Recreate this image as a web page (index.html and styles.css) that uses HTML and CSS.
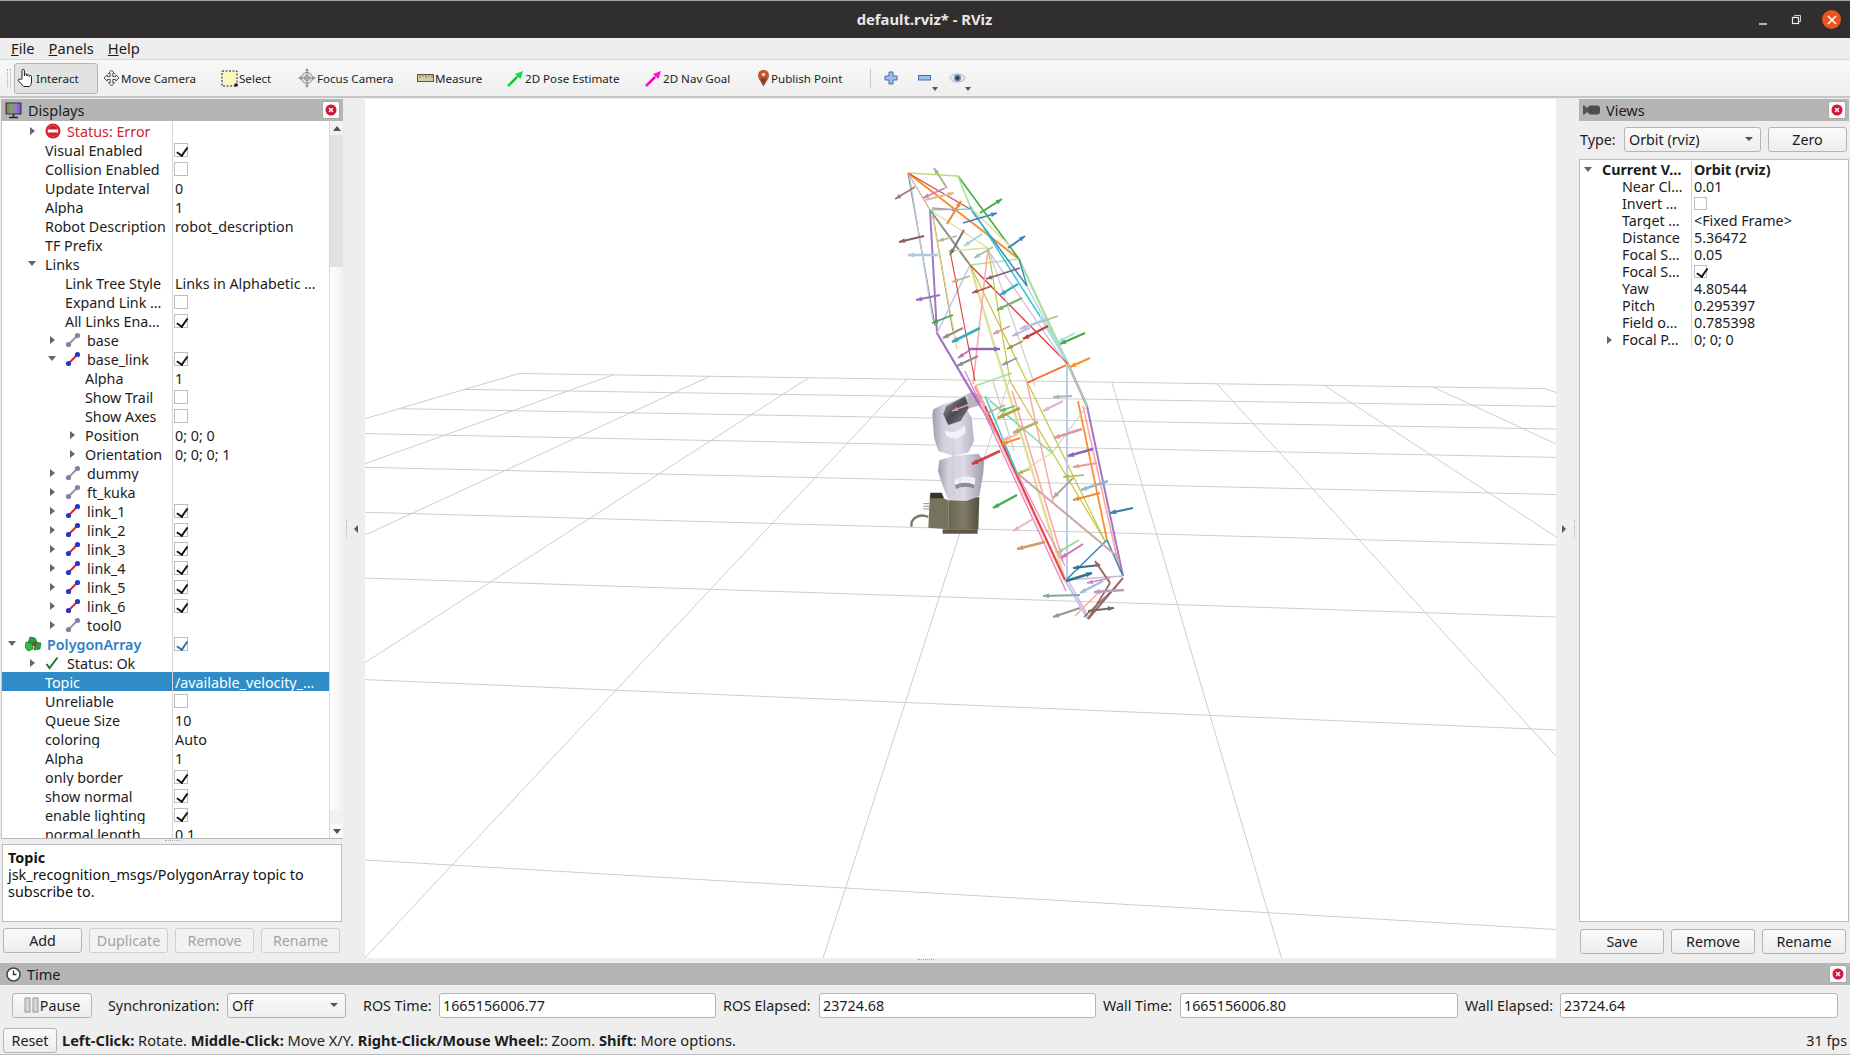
FILE: index.html
```html
<!DOCTYPE html>
<html lang="en">
<head>
  <meta charset="UTF-8">
  <title>default.rviz* - RViz</title>
  <link rel="stylesheet" href="styles.css">
</head>
<body>

  <!-- shared icons -->
  <svg class="defs" width="0" height="0">
    <defs>
      <linearGradient id="screen" x1="0" x2="1" y1="0" y2="0">
        <stop offset="0" stop-color="#d0504a"/><stop offset=".3" stop-color="#5fb35f"/>
        <stop offset=".65" stop-color="#b36fc0"/><stop offset="1" stop-color="#4a60d8"/>
      </linearGradient>
      <linearGradient id="armLight" x1="0" x2="1" y1="0" y2="0">
        <stop offset="0" stop-color="#a09dae"/><stop offset=".22" stop-color="#d2cfde"/><stop offset=".55" stop-color="#dedbe8"/><stop offset="1" stop-color="#9d9aac"/>
      </linearGradient>
      <linearGradient id="armDark" x1="0" x2="1" y1="0" y2="1">
        <stop offset="0" stop-color="#a9a7b3"/><stop offset=".5" stop-color="#4a494f"/><stop offset="1" stop-color="#8a8993"/>
      </linearGradient>
      <linearGradient id="baseSide" x1="0" x2="1" y1="0" y2="0">
        <stop offset="0" stop-color="#6b6651"/><stop offset=".5" stop-color="#807b64"/><stop offset="1" stop-color="#55503f"/>
      </linearGradient>
      <symbol id="close" viewBox="0 0 18 18">
        <rect x=".5" y=".5" width="17" height="17" rx="2" fill="#fbfbfb" stroke="#a8a8a8"/>
        <circle cx="9" cy="9" r="5.5" fill="#d3153c"/>
        <path d="M7 7l4 4M11 7l-4 4" stroke="#fff" stroke-width="1.3"/>
      </symbol>
      <symbol id="link-on" viewBox="0 0 16 16">
        <path d="M4 12L12 4" stroke="#d8262c" stroke-width="2"/>
        <circle cx="3.5" cy="12.5" r="2.6" fill="#2b35c8"/><circle cx="12.5" cy="3.5" r="2.6" fill="#2b35c8"/>
      </symbol>
      <symbol id="link-off" viewBox="0 0 16 16">
        <path d="M4 12L12 4" stroke="#a09090" stroke-width="2"/>
        <circle cx="3.5" cy="12.5" r="2.6" fill="#8581a8"/><circle cx="12.5" cy="3.5" r="2.6" fill="#8581a8"/>
      </symbol>
    </defs>
  </svg>

  <header class="titlebar">
    <span class="title">default.rviz* - RViz</span>
    <div class="wm">
      <svg width="14" height="14" viewBox="0 0 14 14"><path d="M3 11h8" stroke="#f2f2f2" stroke-width="1.4"/></svg>
      <svg width="14" height="14" viewBox="0 0 14 14"><path d="M5.500 3.500V2.500h6v6h-1.500" fill="none" stroke="#cfcfcf"/><rect x="3.500" y="4.500" width="6" height="6" fill="none" stroke="#f2f2f2" stroke-width="1.200"/></svg>
      <span class="wm-close"><svg width="12" height="12" viewBox="0 0 12 12"><path d="M2 2l8 8M10 2l-8 8" stroke="#fff" stroke-width="1.5"/></svg></span>
    </div>
  </header>

  <nav class="menubar">
    <span><u>F</u>ile</span>
    <span><u>P</u>anels</span>
    <span><u>H</u>elp</span>
  </nav>

  <div class="toolbar">
    <span class="grip"></span>
    <div class="tool active t-interact">
      <svg width="18" height="20" viewBox="0 0 18 20"><path d="M5 11V2.500a1.200 1.200 0 0 1 2.400 0V8l.2-1a1.100 1.100 0 0 1 2.200 0l.1 1 .2-.6a1.100 1.100 0 0 1 2.100 0l.1 1 .3-.4a1 1 0 0 1 1.900.4v5.500c0 2-1 3.600-2 4.600H6.500C5 17 3 14.500 1.500 12.800c-.8-1 .4-2.300 1.500-1.500z" fill="#fff" stroke="#222" stroke-width="1"/></svg>
      Interact
    </div>
    <div class="tool t-move">
      <svg width="17" height="18" viewBox="0 0 17 18"><path d="M8.500 1l3 3.500H9.800V7.500h3V5.800L16 9l-3.200 3.200v-1.700h-3V13.500h1.700l-3 3.500-3-3.500h1.700v-3h-3v1.700L1 9l3.200-3.200v1.700h3V4.500H5.500z" fill="#eee" stroke="#555" stroke-width="1"/></svg>
      Move Camera
    </div>
    <div class="tool t-select">
      <svg width="17" height="17" viewBox="0 0 17 17"><rect x="1" y="1" width="15" height="15" fill="#fbf7c0" stroke="#222" stroke-dasharray="2 1.500"/><rect x="13.500" y="13.500" width="3" height="3" fill="#111"/></svg>
      Select
    </div>
    <div class="tool t-focus">
      <svg width="18" height="20" viewBox="0 0 18 20"><circle cx="9" cy="10" r="5.500" fill="#e6e6e6" stroke="#888"/><circle cx="9" cy="10" r="2.500" fill="none" stroke="#888"/><path d="M9 1v18M1 10h16" stroke="#888"/><path d="M9 0l2 3H7zM9 20l2-3H7zM0 10l3-2v4zM18 10l-3-2v4z" fill="#999"/></svg>
      Focus Camera
    </div>
    <div class="tool t-measure">
      <svg width="17" height="10" viewBox="0 0 17 10"><rect x=".5" y="1.500" width="16" height="7" fill="#d9cf9c" stroke="#555"/><path d="M3 2v3M6 2v2M9 2v3M12 2v2M15 2v3" stroke="#776"/></svg>
      Measure
    </div>
    <div class="tool t-pose">
      <svg width="17" height="17" viewBox="0 0 17 17"><path d="M1 16L10 7" stroke="#17d94a" stroke-width="2.600"/><path d="M16 1l-2.500 8-5.500-5z" fill="#17d94a"/><path d="M4 13l7-7" stroke="#0a7a28" stroke-width=".7"/></svg>
      2D Pose Estimate
    </div>
    <div class="tool t-nav">
      <svg width="17" height="17" viewBox="0 0 17 17"><path d="M1 16L10 7" stroke="#f418d0" stroke-width="2.600"/><path d="M16 1l-2.500 8-5.500-5z" fill="#f418d0"/><path d="M4 13l7-7" stroke="#8a0a70" stroke-width=".7"/></svg>
      2D Nav Goal
    </div>
    <div class="tool t-point">
      <svg width="13" height="18" viewBox="0 0 13 18"><path d="M6.500 17.500C4 12.500 1 10 1 6.200a5.500 5.500 0 0 1 11 0C12 10 9 12.500 6.500 17.500z" fill="#c9532a"/><path d="M6.500 17.500C5 13 3.500 11 3.500 9h6c0 2-1.500 4-3 8.500z" fill="#6e4a32"/><circle cx="6.500" cy="5.500" r="1.700" fill="#f1d9c8"/></svg>
      Publish Point
    </div>
    <span class="tool-sep"></span>
    <div class="tool-icon">
      <svg width="14" height="14" viewBox="0 0 14 14"><path d="M5 1h4v4h4v4H9v4H5V9H1V5h4z" fill="#9cc0e8" stroke="#3f70ac"/></svg>
    </div>
    <div class="tool-icon more">
      <svg width="13" height="6" viewBox="0 0 13 6"><rect x=".5" y=".5" width="12" height="4.500" fill="#9cc0e8" stroke="#3f70ac"/></svg>
    </div>
    <div class="tool-icon more eye">
      <svg width="17" height="12" viewBox="0 0 17 12"><path d="M.5 6C4 .5 13 .5 16.500 6 13 11.500 4 11.500.5 6z" fill="#e8e8ea" stroke="#b8b8c0"/><circle cx="8.500" cy="6" r="3.400" fill="#5d7fb8"/><circle cx="8.500" cy="6" r="1.500" fill="#20283c"/></svg>
    </div>
  </div>

  <main class="workspace">
    <div class="docks">

      <!-- Displays panel -->
      <section class="dock displays">
        <div class="dock-title">
          <svg class="dock-icon" width="17" height="17" viewBox="0 0 17 17"><rect x="1" y="1" width="15" height="11" fill="url(#screen)" stroke="#333"/><path d="M8.500 12v3M4 15.500h9" stroke="#222" stroke-width="1.500"/></svg>
          <span>Displays</span>
          <svg class="dock-close" width="18" height="18"><use href="#close"/></svg>
        </div>
        <div class="tree-wrap">
          <div class="tree">
            <div class="row"><div class="name l1"><i class="exp closed"></i><span class="icon"><svg width="16" height="16" viewBox="0 0 16 16"><circle cx="8" cy="8" r="7.500" fill="#d11b26"/><circle cx="8" cy="8" r="5.500" fill="none" stroke="#ee7078" stroke-width=".6"/><rect x="3" y="6.500" width="10" height="3" fill="#fff"/></svg></span><span class="err">Status: Error</span></div><div class="val"></div></div>
            <div class="row"><div class="name l1"><i class="exp"></i>Visual Enabled</div><div class="val"><b class="cb on"></b></div></div>
            <div class="row"><div class="name l1"><i class="exp"></i>Collision Enabled</div><div class="val"><b class="cb"></b></div></div>
            <div class="row"><div class="name l1"><i class="exp"></i>Update Interval</div><div class="val">0</div></div>
            <div class="row"><div class="name l1"><i class="exp"></i>Alpha</div><div class="val">1</div></div>
            <div class="row"><div class="name l1"><i class="exp"></i>Robot Description</div><div class="val">robot_description</div></div>
            <div class="row"><div class="name l1"><i class="exp"></i>TF Prefix</div><div class="val"></div></div>
            <div class="row"><div class="name l1"><i class="exp open"></i>Links</div><div class="val"></div></div>
            <div class="row"><div class="name l2"><i class="exp"></i>Link Tree Style</div><div class="val">Links in Alphabetic …</div></div>
            <div class="row"><div class="name l2"><i class="exp"></i>Expand Link …</div><div class="val"><b class="cb"></b></div></div>
            <div class="row"><div class="name l2"><i class="exp"></i>All Links Ena…</div><div class="val"><b class="cb on"></b></div></div>
            <div class="row"><div class="name l2"><i class="exp closed"></i><span class="icon"><svg width="16" height="16"><use href="#link-off"/></svg></span>base</div><div class="val"></div></div>
            <div class="row"><div class="name l2"><i class="exp open"></i><span class="icon"><svg width="16" height="16"><use href="#link-on"/></svg></span>base_link</div><div class="val"><b class="cb on"></b></div></div>
            <div class="row"><div class="name l3"><i class="exp"></i>Alpha</div><div class="val">1</div></div>
            <div class="row"><div class="name l3"><i class="exp"></i>Show Trail</div><div class="val"><b class="cb"></b></div></div>
            <div class="row"><div class="name l3"><i class="exp"></i>Show Axes</div><div class="val"><b class="cb"></b></div></div>
            <div class="row"><div class="name l3"><i class="exp closed"></i>Position</div><div class="val">0; 0; 0</div></div>
            <div class="row"><div class="name l3"><i class="exp closed"></i>Orientation</div><div class="val">0; 0; 0; 1</div></div>
            <div class="row"><div class="name l2"><i class="exp closed"></i><span class="icon"><svg width="16" height="16"><use href="#link-off"/></svg></span>dummy</div><div class="val"></div></div>
            <div class="row"><div class="name l2"><i class="exp closed"></i><span class="icon"><svg width="16" height="16"><use href="#link-off"/></svg></span>ft_kuka</div><div class="val"></div></div>
            <div class="row"><div class="name l2"><i class="exp closed"></i><span class="icon"><svg width="16" height="16"><use href="#link-on"/></svg></span>link_1</div><div class="val"><b class="cb on"></b></div></div>
            <div class="row"><div class="name l2"><i class="exp closed"></i><span class="icon"><svg width="16" height="16"><use href="#link-on"/></svg></span>link_2</div><div class="val"><b class="cb on"></b></div></div>
            <div class="row"><div class="name l2"><i class="exp closed"></i><span class="icon"><svg width="16" height="16"><use href="#link-on"/></svg></span>link_3</div><div class="val"><b class="cb on"></b></div></div>
            <div class="row"><div class="name l2"><i class="exp closed"></i><span class="icon"><svg width="16" height="16"><use href="#link-on"/></svg></span>link_4</div><div class="val"><b class="cb on"></b></div></div>
            <div class="row"><div class="name l2"><i class="exp closed"></i><span class="icon"><svg width="16" height="16"><use href="#link-on"/></svg></span>link_5</div><div class="val"><b class="cb on"></b></div></div>
            <div class="row"><div class="name l2"><i class="exp closed"></i><span class="icon"><svg width="16" height="16"><use href="#link-on"/></svg></span>link_6</div><div class="val"><b class="cb on"></b></div></div>
            <div class="row"><div class="name l2"><i class="exp closed"></i><span class="icon"><svg width="16" height="16"><use href="#link-off"/></svg></span>tool0</div><div class="val"></div></div>
            <div class="row"><div class="name l0"><i class="exp open"></i><span class="icon"><svg width="17" height="16" viewBox="0 0 17 16"><path d="M5 1l5 1 2 4-4 3-5-2z" fill="#26a33a" stroke="#0c5c1c" stroke-width=".6"/><path d="M1 6l6 1 1 6-5 2-3-4z" fill="#33b848" stroke="#0c5c1c" stroke-width=".6"/><path d="M10 6l6 1-1 6-6 1z" fill="#26a33a" stroke="#0c5c1c" stroke-width=".6"/><path d="M7 7l4-1 .5 3-3 1.500z" fill="#c22828"/></svg></span><span class="display-name">PolygonArray</span></div><div class="val"><b class="cb on blue"></b></div></div>
            <div class="row"><div class="name l1"><i class="exp closed"></i><span class="icon"><svg width="14" height="14" viewBox="0 0 14 14"><path d="M1.500 8l3 4L12.500 1.500" fill="none" stroke="#1f7a2c" stroke-width="2"/></svg></span>Status: Ok</div><div class="val"></div></div>
            <div class="row selected"><div class="name l1"><i class="exp"></i>Topic</div><div class="val">/available_velocity_…</div></div>
            <div class="row"><div class="name l1"><i class="exp"></i>Unreliable</div><div class="val"><b class="cb"></b></div></div>
            <div class="row"><div class="name l1"><i class="exp"></i>Queue Size</div><div class="val">10</div></div>
            <div class="row"><div class="name l1"><i class="exp"></i>coloring</div><div class="val">Auto</div></div>
            <div class="row"><div class="name l1"><i class="exp"></i>Alpha</div><div class="val">1</div></div>
            <div class="row"><div class="name l1"><i class="exp"></i>only border</div><div class="val"><b class="cb on"></b></div></div>
            <div class="row"><div class="name l1"><i class="exp"></i>show normal</div><div class="val"><b class="cb on"></b></div></div>
            <div class="row"><div class="name l1"><i class="exp"></i>enable lighting</div><div class="val"><b class="cb on"></b></div></div>
            <div class="row"><div class="name l1"><i class="exp"></i>normal length</div><div class="val">0.1</div></div>
          </div>
          <div class="scrollbar">
            <span class="sb-btn up"></span>
            <span class="sb-thumb"></span>
            <span class="sb-track"></span>
            <span class="sb-btn"></span>
            <span class="sb-btn down"></span>
          </div>
        </div>
        <div class="h-grip"></div>
        <div class="help">
          <strong>Topic</strong><br>
          jsk_recognition_msgs/PolygonArray topic to<br>
          subscribe to.
        </div>
        <div class="btn-row">
          <button>Add</button>
          <button disabled>Duplicate</button>
          <button disabled>Remove</button>
          <button disabled>Rename</button>
        </div>
      </section>

      <div class="v-split"><i class="dots"></i><i class="tri left"></i></div>

      <!-- 3D view, svg uses page coordinates -->
      <div class="viewport">
        <svg id="scene" width="1191" height="859" viewBox="365 98 1191 859">
          <g class="grid">
            <path d="M519 372.500L1545 387.600M464 388.400L1556 405.400M400 407.700L1556 428M365 432.600L1556 456.400M365 466.300L1556 493.500M365 511.300L1556 544M365 577L1556 616M365 678.600L1556 729M365 859L1556 928.500"/>
            <path d="M519 372.500L365 417.600M612.600 374L365 462.700M709 375.700L365 534M807.800 377.300L365 661.600M907 378.500L365 957M1009 380L823 957M1112 381.600L1281.500 957M1217 382.800L1556 755M1324.600 384.400L1556 535.800M1433 386L1556 443M1545 387.600L1556 391.500"/>
          </g>
          <!-- robot arm, coords in zoomed px scale -->
          <g transform="translate(900 380) scale(.3333)">
            <path d="M85 408C55 395 30 415 35 437" fill="none" stroke="#7b7661" stroke-width="7"/>
            <path d="M70 368h18M70 376h18M70 384h18" stroke="#555" stroke-width="2"/>
            <path d="M90 335L145 358 145 445 85 440z" fill="#77725c"/>
            <path d="M93 335L125 335 132 352 90 352z" fill="#36352c"/>
            <path d="M145 358L238 348 235 445 145 445z" fill="url(#baseSide)"/>
            <path d="M128 445H233V458H128z" fill="#5d5845"/>
            <path d="M118 238L160 225 235 218 252 240 250 275 238 345 200 360 145 358 125 305 114 270z" fill="url(#armLight)"/>
            <path d="M163 296Q195 280 226 292L224 312Q195 298 165 312z" fill="#f0eef6"/>
            <path d="M165 312Q195 298 224 312L222 322Q195 312 168 324z" fill="#8c8a98"/>
            <path d="M180 225V350M160 225V345" stroke="#c4c1d0" stroke-width="1.500"/>
            <path d="M100 85L130 70 160 60 215 32 247 45 240 72 200 85 215 110 222 180 205 215 160 225 115 210 102 170 97 100z" fill="url(#armLight)"/>
            <path d="M138 76L195 46 208 78 182 120 145 132 130 100z" fill="url(#armDark)"/>
            <path d="M205 40L245 45 238 72 205 80z" fill="#b8b5c4"/>
            <path d="M136 148Q165 165 195 132L197 156Q165 185 138 163z" fill="#f4f2f8"/>
            <path d="M160 225V165M195 215V160" stroke="#c4c1d0" stroke-width="1.500"/>
          </g>
          <g id="mesh"></g>
        </svg>
      </div>

      <div class="v-split right"><i class="tri right"></i><i class="dots"></i></div>

      <!-- Views panel -->
      <section class="dock views">
        <div class="dock-title">
          <svg class="dock-icon" width="17" height="12" viewBox="0 0 17 12"><path d="M0 1l5 3v4L0 11z" fill="#555"/><rect x="5" y="1.500" width="12" height="9" rx="3" fill="#4c4c4c"/></svg>
          <span>Views</span>
          <svg class="dock-close" width="18" height="18"><use href="#close"/></svg>
        </div>
        <div class="view-type">
          <label>Type:</label>
          <div class="combo">Orbit (rviz)<i class="combo-arrow"></i></div>
          <button>Zero</button>
        </div>
        <div class="tree props">
          <div class="row"><div class="name p0"><i class="exp open"></i><strong>Current V…</strong></div><div class="val"><strong>Orbit (rviz)</strong></div></div>
          <div class="row"><div class="name p1"><i class="exp"></i>Near Cl…</div><div class="val">0.01</div></div>
          <div class="row"><div class="name p1"><i class="exp"></i>Invert …</div><div class="val"><b class="cb"></b></div></div>
          <div class="row"><div class="name p1"><i class="exp"></i>Target …</div><div class="val">&lt;Fixed Frame&gt;</div></div>
          <div class="row"><div class="name p1"><i class="exp"></i>Distance</div><div class="val">5.36472</div></div>
          <div class="row"><div class="name p1"><i class="exp"></i>Focal S…</div><div class="val">0.05</div></div>
          <div class="row"><div class="name p1"><i class="exp"></i>Focal S…</div><div class="val"><b class="cb on"></b></div></div>
          <div class="row"><div class="name p1"><i class="exp"></i>Yaw</div><div class="val">4.80544</div></div>
          <div class="row"><div class="name p1"><i class="exp"></i>Pitch</div><div class="val">0.295397</div></div>
          <div class="row"><div class="name p1"><i class="exp"></i>Field o…</div><div class="val">0.785398</div></div>
          <div class="row"><div class="name p1"><i class="exp closed"></i>Focal P…</div><div class="val">0; 0; 0</div></div>
        </div>
        <div class="btn-row views-btns">
          <button>Save</button>
          <button>Remove</button>
          <button>Rename</button>
        </div>
      </section>
    </div>
    <div class="h-grip bottom"></div>
  </main>

  <!-- Time panel -->
  <section class="time">
    <div class="dock-title">
      <svg class="dock-icon" width="15" height="15" viewBox="0 0 15 15"><circle cx="7.500" cy="7.500" r="6.500" fill="#fff" stroke="#444" stroke-width="1.500"/><path d="M7.500 3.500v4h3" fill="none" stroke="#333" stroke-width="1.300"/></svg>
      <span>Time</span>
      <svg class="dock-close" width="18" height="18"><use href="#close"/></svg>
    </div>
    <div class="time-row">
      <button class="pause"><svg width="15" height="16" viewBox="0 0 15 16"><rect x="1" y="1" width="5" height="14" fill="#d4d4d4" stroke="#999"/><rect x="9" y="1" width="5" height="14" fill="#d4d4d4" stroke="#999"/></svg>Pause</button>
      <label class="sync-label">Synchronization:</label>
      <div class="combo">Off<i class="combo-arrow"></i></div>
      <label class="ros-label">ROS Time:</label>
      <input type="text" value="1665156006.77">
      <label>ROS Elapsed:</label>
      <input type="text" value="23724.68">
      <label>Wall Time:</label>
      <input type="text" value="1665156006.80">
      <label>Wall Elapsed:</label>
      <input type="text" value="23724.64">
    </div>
  </section>

  <footer class="statusbar">
    <button>Reset</button>
    <span class="hint"><b>Left-Click:</b> Rotate. <b>Middle-Click:</b> Move X/Y. <b>Right-Click/Mouse Wheel:</b>: Zoom. <b>Shift</b>: More options.</span>
    <span class="fps">31 fps</span>
  </footer>

  <script src="scene.js"></script>
</body>
</html>
```

FILE: styles.css
```css
* { box-sizing: border-box; }
html, body { margin: 0; height: 100%; }
body {
  width: 1850px; height: 1055px; overflow: hidden;
  display: flex; flex-direction: column;
  background: #eeeeee; color: #1c1c1c;
  font: 14.3px/19px "Noto Sans", "Open Sans", sans-serif;
}
.defs { position: absolute; }

.titlebar { height: 38px; flex: none; background: #302e2e; border-top: 1px solid #a8a8a8; display: flex; align-items: center; justify-content: center; position: relative; }
.title { color: #e8e8e8; font-weight: 700; font-size: 14.8px; margin-left: -1px; }
.wm { position: absolute; right: 9px; top: 9px; display: flex; align-items: center; gap: 19px; }
.wm-close { width: 19px; height: 19px; border-radius: 50%; background: #e95420; display: flex; align-items: center; justify-content: center; }

.menubar { height: 21px; flex: none; display: flex; gap: 14px; padding-left: 11px; background: #eeeeee; line-height: 21px; font-size: 14.7px; }

.toolbar { height: 39px; flex: none; display: flex; align-items: center; padding-left: 7px; background: linear-gradient(#f8f8f8, #efefef); border-top: 1px solid #d8d8d8; border-bottom: 2px solid #c6c6c6; font-size: 11.6px; }
.grip { width: 4px; height: 18px; margin-right: 3px; border-left: 1px dotted #b0b0b0; border-right: 1px dotted #b0b0b0; }
.tool { height: 31px; display: flex; align-items: center; gap: 1px; padding-left: 2px; white-space: nowrap; line-height: 33px; }
.tool.active { background: #e2e2e2; border: 1px solid #b4b4b4; border-radius: 3px; }
.t-interact { width: 84px; margin-right: 3px; }
.t-move { width: 118px; }
.t-select { width: 77px; }
.t-focus { width: 119px; }
.t-measure { width: 90px; }
.t-pose { width: 138px; }
.t-nav { width: 112px; }
.t-point { width: 115px; }
.tool-sep { width: 1px; height: 19px; background: #c8c8c8; margin-right: 13px; }
.tool-icon { width: 34px; height: 20px; display: flex; align-items: center; position: relative; }
.tool-icon.eye { margin-left: -3px; }
.tool-icon.more::after { content: ""; position: absolute; left: 14px; bottom: -3px; border: 3px solid transparent; border-top: 4px solid #555; border-bottom: 0; }
.tool-icon.eye::after { left: 16px; }

.workspace { flex: none; height: 865px; display: flex; flex-direction: column; }
.docks { height: 860px; display: flex; padding-top: 1px; }
.dock { display: flex; flex-direction: column; }
.displays { width: 343px; padding-left: 1px; }
.views { width: 271px; padding-right: 1px; margin-left: 0; }
.viewport { width: 1191px; height: 859px; background: #fff; overflow: hidden; }
#scene { display: block; }
.grid path { fill: none; stroke: #cdcdcd; stroke-width: 1; }
#mesh { opacity: .88; }

.v-split { width: 22px; display: flex; align-items: center; padding-left: 3px; gap: 7px; }
.v-split.right { width: 23px; padding-left: 6px; gap: 8px; }
.dots { width: 1px; height: 18px; border-left: 1px dotted #b5b5b5; }
.tri { width: 0; height: 0; border: 4px solid transparent; border-left-width: 0; border-right: 4px solid #555; }
.tri.right { border-right-width: 0; border-left: 4px solid #555; }

.dock-title { height: 22px; flex: none; display: flex; align-items: center; background: #b5b5b5; font-size: 14.5px; padding-left: 4px; position: relative; }
.dock-icon { margin-right: 6px; }
.dock-close { position: absolute; right: 3px; top: 2px; }

.tree-wrap { height: 718px; flex: none; display: flex; background: #fff; border-left: 1px solid #c4c4c4; border-bottom: 1px solid #b4b4b4; overflow: hidden; }
.tree { flex: 1; min-width: 0; overflow: hidden; background: #fff; }
.row { display: grid; grid-template-columns: 171px 1fr; height: 19px; white-space: nowrap; }
.row.selected { background: #308cc6; color: #fff; }
.name { display: flex; align-items: center; border-right: 1px solid #d6d6d6; overflow: hidden; }
.val { display: flex; align-items: center; padding-left: 2px; overflow: hidden; }
.tree-wrap .name, .tree-wrap .val { padding-top: 1px; }
.tree-wrap .exp, .tree-wrap .icon, .tree-wrap .cb { margin-top: -1px; }
.tree-wrap .cb { margin-left: -1px; }
.l0 { padding-left: 6px; }
.l1 { padding-left: 26px; }
.l2 { padding-left: 46px; }
.l3 { padding-left: 66px; }
.exp { flex: none; width: 17px; display: flex; align-items: center; padding-left: 2px; }
.exp.closed::before { content: ""; border: 4px solid transparent; border-left: 5px solid #666; border-right: 0; }
.exp.open::before { content: ""; border: 4.500px solid transparent; border-top: 5px solid #666; border-bottom: 0; margin-left: -2px; }
.icon { flex: none; width: 22px; display: flex; align-items: center; padding-left: 0; }
.err { color: #d2232a; }
.display-name { color: #2f7dc8; font-weight: 600; }
.cb { display: block; width: 14px; height: 14px; background: #fff; border: 1px solid #bdbdbd; position: relative; font-weight: 400; }
.cb.on::after { content: ""; position: absolute; left: 4px; top: 1px; width: 4.500px; height: 8.500px; border: solid #111; border-width: 0 2px 2px 0; transform: rotate(35deg); }
.cb.blue::after { border-color: #2f6fb4; }

.scrollbar { width: 14px; flex: none; display: flex; flex-direction: column; border-left: 1px solid #d8d8d8; background: linear-gradient(90deg, #fff, #f2f2f2); }
.sb-btn { height: 14px; flex: none; background: #f2f2f2; display: flex; align-items: center; justify-content: center; }
.sb-btn.up::before { content: ""; border: 4px solid transparent; border-bottom: 5px solid #555; border-top: 0; }
.sb-btn.down { background: #fafafa; }
.sb-btn.down::before { content: ""; border: 4px solid transparent; border-top: 5px solid #555; border-bottom: 0; }
.sb-thumb { height: 132px; flex: none; background: #e2e2e2; }
.sb-track { flex: 1; }

.h-grip { height: 5px; flex: none; position: relative; }
.h-grip::after { content: ""; position: absolute; left: 164px; top: 1px; width: 16px; border-top: 1px dotted #aaa; }
.h-grip.bottom { height: 5px; }
.h-grip.bottom::after { left: 918px; }

.help { height: 78px; flex: none; background: #fff; border: 1px solid #bcbcbc; padding: 4px 5px; line-height: 17px; font-size: 14.4px; margin-right: 1px; margin-left: 1px; color: #111; }

button { font: inherit; color: #1c1c1c; background: linear-gradient(#fafafa, #ededed); border: 1px solid #b4b4b4; border-radius: 3px; padding: 0; }
button:disabled { color: #a2a2a2; border-color: #cfcfcf; background: #f2f2f2; }

.btn-row { display: grid; grid-template-columns: repeat(4, 79px); gap: 7px; height: 25px; margin: 6px 0 0 2px; flex: none; }
.views-btns { grid-template-columns: repeat(3, 84px); margin: 7px 0 0 1px; gap: 7px; }

.view-type { height: 38px; flex: none; display: flex; align-items: center; padding: 0 0 2px 1px; }
.view-type label { width: 44px; }
.view-type .combo { width: 137px; }
.view-type button { width: 79px; height: 25px; margin-left: 7px; }
.combo { height: 25px; display: flex; align-items: center; justify-content: space-between; padding: 0 7px 0 4px; background: linear-gradient(#fafafa, #eeeeee); border: 1px solid #b4b4b4; border-radius: 3px; }
.combo-arrow { border: 4px solid transparent; border-top: 4.500px solid #555; border-bottom: 0; }

.props { flex: none; height: 763px; border: 1px solid #bcbcbc; margin-left: 0; }
.props .row { height: 17px; grid-template-columns: 112px 1fr; line-height: 17px; }
.props .name { border-right: 1px solid #d6d6d6; }
.props .row:first-child { margin-top: 1px; }
.props .val { padding-left: 2px; }
.p0 { padding-left: 4px; }
.p1 { padding-left: 25px; }
.p0 .exp { width: 18px; padding-left: 2px; }
.props .cb { width: 13px; height: 13px; }
.props .cb.on::after { left: 3.500px; top: 0; }

.time { flex: none; height: 58px; }
.time .dock-title { padding-left: 6px; }
.time-row { height: 36px; display: grid; align-items: center; padding: 4px 0 0 12px; grid-template-columns: 80px 135px 119px 93px 277px 103px 277px 84px 278px 102px 278px; }
.time-row label { padding-left: 7px; white-space: nowrap; }
.time-row .sync-label { padding-left: 16px; }
.time-row .ros-label { padding-left: 17px; }
.time-row input { height: 25px; width: 100%; font: inherit; color: #1c1c1c; border: 1px solid #b4b4b4; border-radius: 3px; padding: 0 3px; background: #fff; }
.pause { height: 25px; display: flex; align-items: center; justify-content: center; gap: 1px; }

.statusbar { flex: 1; display: flex; align-items: center; padding: 5px 3px 0 3px; border-bottom: 1px solid #bbb; }
.statusbar button { width: 54px; height: 25px; }
.hint { margin-left: 5px; font-size: 14.6px; }
.fps { margin-left: auto; }
```

FILE: scene.js
```js
// polygon outlines and normal arrows, page coordinates
const edges = [
  ['#8c564b', 1.2, 908,172, 935,325], ['#aec7e8', 1.4, 909,172, 933,320],
  ['#ff7f0e', 2, 908,172, 1019,258], ['#b5d86a', 1.6, 908,172, 958,175],
  ['#2ca02c', 1.6, 958,175, 1019,258], ['#98df8a', 1.6, 958,175, 972,210],
  ['#d62728', 1.2, 908,172, 970,208], ['#c49c94', 1.2, 908,172, 930,209],
  ['#9467bd', 2, 930,209, 937,332], ['#7f7f7f', 2, 930,209, 970,264],
  ['#dbdb8d', 1.2, 930,209, 988,247], ['#2ca02c', 1.2, 932,210, 953,330],
  ['#ffbb78', 1.2, 932,212, 957,348], ['#aec7e8', 1.6, 937,332, 970,264],
  ['#98df8a', 1.4, 1019,258, 970,264], ['#98df8a', 2.2, 1019,258, 1068,363],
  ['#1f77b4', 1.5, 972,210, 1027,285], ['#1f77b4', 1.4, 1027,285, 1019,258],
  ['#17becf', 1.5, 970,205, 1043,320], ['#9edae5', 2.4, 1040,315, 1068,363],
  ['#aec7e8', 1.4, 1027,285, 1068,363], ['#dbdb8d', 1.5, 972,208, 1010,245],
  ['#dbdb8d', 1.6, 988,247, 948,250], ['#17becf', 1, 930,209, 972,208],
  ['#dbdb8d', 2.4, 970,264, 1065,579], ['#bcbd22', 1.2, 970,264, 1105,540],
  ['#d62728', 1.4, 970,264, 1068,363], ['#c7c7c7', 1.2, 988,247, 1035,385],
  ['#ff9896', 1.5, 988,248, 973,383], ['#d62728', 1.1, 950,250, 975,380],
  ['#c5b0d5', 1.2, 990,252, 1066,363], ['#e377c2', 2, 937,332, 978,402],
  ['#98df8a', 1.4, 975,385, 1012,372], ['#ff9896', 1.6, 1068,363, 1027,382],
  ['#d62728', 1.2, 1067,364, 1027,382], ['#ff7f0e', 1.2, 1030,380, 1068,363],
  ['#bcbd22', 1.2, 988,247, 1010,380], ['#ff9896', 1.4, 1027,382, 1053,500],

  ['#9467bd', 2, 937,332, 1010,455], ['#ff9896', 3, 975,385, 1065,579],
  ['#d62728', 1.6, 985,405, 1065,579], ['#e377c2', 1.4, 965,370, 1066,590],
  ['#9467bd', 2.2, 1068,363, 1087,405], ['#98df8a', 1.4, 1068,363, 1087,405],
  ['#9467bd', 2, 1087,405, 1123,575], ['#ff9896', 1.6, 1083,405, 1120,570],
  ['#ff7f0e', 1.8, 1078,400, 1107,539], ['#aec7e8', 2, 1067,364, 1067,578],
  ['#1f77b4', 1.6, 1107,539, 1066,579], ['#1f77b4', 1.6, 1107,539, 1123,575],
  ['#c5b0d5', 1.6, 1065,579, 1123,575], ['#aec7e8', 2.4, 1065,579, 1088,618],
  ['#e377c2', 1, 1068,579, 1090,618], ['#8c564b', 2, 1088,618, 1123,577],
  ['#8c564b', 1.8, 1088,618, 1110,582], ['#8c564b', 1.6, 1084,616, 1116,586],
  ['#c49c94', 2, 1017,472, 1118,556], ['#ff9896', 1.4, 1100,590, 1075,615],
  ['#17becf', 1.4, 985,395, 1017,472], ['#17becf', 1.2, 990,400, 1052,452],
  ['#c7c7c7', 1.2, 1052,452, 1087,405], ['#dbdb8d', 1.2, 1017,473, 1052,452],
  ['#bcbd22', 1.2, 1010,380, 1105,540], ['#98df8a', 1.2, 985,395, 1052,452],
  ['#ff9896', 1.6, 1012,390, 1063,560], ['#c7c7c7', 1.2, 993,380, 1014,450],
  ['#e377c2', 1.2, 1017,472, 1065,565],
];

const arrows = [
  ['#8c6d6d', 1.8, 915,186, 895,198], ['#93a884', 1.8, 947,187, 934,167],
  ['#c66fb0', 1.8, 945,187, 923,197], ['#e0b080', 2.2, 925,199, 954,192],
  ['#2ca02c', 2, 980,212, 1002,198], ['#1f77b4', 1.8, 963,222, 997,212],
  ['#e67e14', 2, 947,223, 961,200], ['#b78f80', 1.6, 932,207, 958,209],
  ['#1f77b4', 2, 1008,247, 1025,235], ['#7a4a44', 1.8, 924,235, 899,241],
  ['#b5ad7a', 1.6, 957,235, 938,240], ['#666666', 2, 964,229, 950,254],
  ['#9ccbd4', 1.8, 982,233, 964,245], ['#a8c0dc', 2.6, 938,254, 908,254],
  ['#8fb8c0', 1.8, 993,246, 974,257], ['#8a5fb5', 2, 940,294, 916,299],
  ['#3a8a3a', 1.6, 953,314, 932,322], ['#7a4a6a', 1.8, 1020,267, 986,278],
  ['#c8a27a', 1.8, 970,275, 952,281], ['#a33a3a', 1.6, 992,285, 972,292],
  ['#17a0b0', 2.2, 1018,283, 1000,294], ['#6aa84f', 2.2, 1022,297, 997,309],
  ['#b5b07a', 1.8, 1058,315, 1020,328], ['#a8bcdc', 2, 1046,318, 1020,328],
  ['#c01f2f', 2.4, 1048,325, 1023,338], ['#b8a8cc', 1.8, 1030,327, 1012,335],
  ['#9edae5', 1.8, 1075,332, 1058,341], ['#2ca02c', 2, 1085,332, 1060,343],
  ['#ff7f0e', 2, 1090,357, 1070,366], ['#17a5b5', 2.6, 980,327, 952,341],
  ['#8a7a70', 2, 963,327, 943,337], ['#7e4fa8', 2.4, 968,348, 1000,348],
  ['#808080', 2, 978,355, 957,365], ['#d98a92', 1.8, 1010,325, 993,333],
  ['#8f8f30', 1.6, 1023,340, 1007,348], ['#7a8aa8', 1.8, 1017,357, 1002,364],
  ['#b45fa8', 1.8, 973,347, 958,357],

  ['#aaaaaa', 1.8, 1072,395, 1053,396], ['#dca8cc', 2, 1063,400, 1043,410],
  ['#a8b090', 1.8, 1005,404, 987,412], ['#9a9a20', 2.6, 1020,407, 998,417],
  ['#60a860', 1.6, 1015,405, 1000,410], ['#a8a860', 2.8, 1038,421, 1013,432],
  ['#d98a8a', 2.4, 1082,428, 1054,437], ['#e8a8c0', 1.8, 970,403, 952,410],
  ['#ff7f0e', 2, 1020,437, 1002,443], ['#ff9896', 1.6, 1018,433, 1003,439],
  ['#7e4fa8', 2.4, 1093,448, 1068,455], ['#e88a8a', 1.8, 1097,462, 1073,466],
  ['#d62728', 2.6, 1000,450, 972,463], ['#b0b030', 1.6, 1084,474, 1063,476],
  ['#b0b030', 1.6, 1030,468, 1017,473], ['#a89a8a', 2, 1073,477, 1053,497],
  ['#8aaccc', 2.4, 1108,480, 1081,489], ['#e67e14', 2, 1100,492, 1073,499],
  ['#1f6ea0', 2.2, 1133,507, 1110,512], ['#2ca02c', 2.2, 1017,494, 993,507],
  ['#e3a8c0', 2, 1033,518, 1013,530], ['#c8904e', 2.4, 1045,541, 1017,548],
  ['#8fd080', 2, 1079,539, 1057,552], ['#c860a8', 2, 1083,543, 1061,557],
  ['#155f85', 2, 1100,564, 1073,567], ['#155f85', 2.6, 1066,580, 1092,572],
  ['#8c564b', 2, 1110,582, 1095,560], ['#8fb5cc', 2.2, 1103,580, 1080,592],
  ['#6f9ea5', 2.2, 1080,594, 1043,595], ['#a890b8', 2.4, 1124,589, 1094,591],
  ['#c878c0', 1.6, 1110,577, 1087,582], ['#8a8a8a', 2.2, 1080,607, 1053,616],
  ['#5f5350', 2, 1088,610, 1114,607],
];

const mesh = document.getElementById('mesh');

function add(tag, attrs) {
  const el = document.createElementNS('http://www.w3.org/2000/svg', tag);
  for (const k in attrs) el.setAttribute(k, attrs[k]);
  mesh.appendChild(el);
}

edges.forEach(([c, w, x1, y1, x2, y2]) => {
  add('line', { x1, y1, x2, y2, stroke: c, 'stroke-width': w });
});

arrows.forEach(([c, w, x1, y1, x2, y2]) => {
  add('line', { x1, y1, x2, y2, stroke: c, 'stroke-width': w });
  const len = Math.hypot(x2 - x1, y2 - y1);
  const ux = (x2 - x1) / len, uy = (y2 - y1) / len;
  const bx = x2 - ux * 6, by = y2 - uy * 6;
  const s = w * 0.5 + 1.4;
  const pts = [[x2, y2], [bx - uy * s, by + ux * s], [bx + uy * s, by - ux * s]];
  add('polygon', { points: pts.map(p => p.join(',')).join(' '), fill: c });
});
```
